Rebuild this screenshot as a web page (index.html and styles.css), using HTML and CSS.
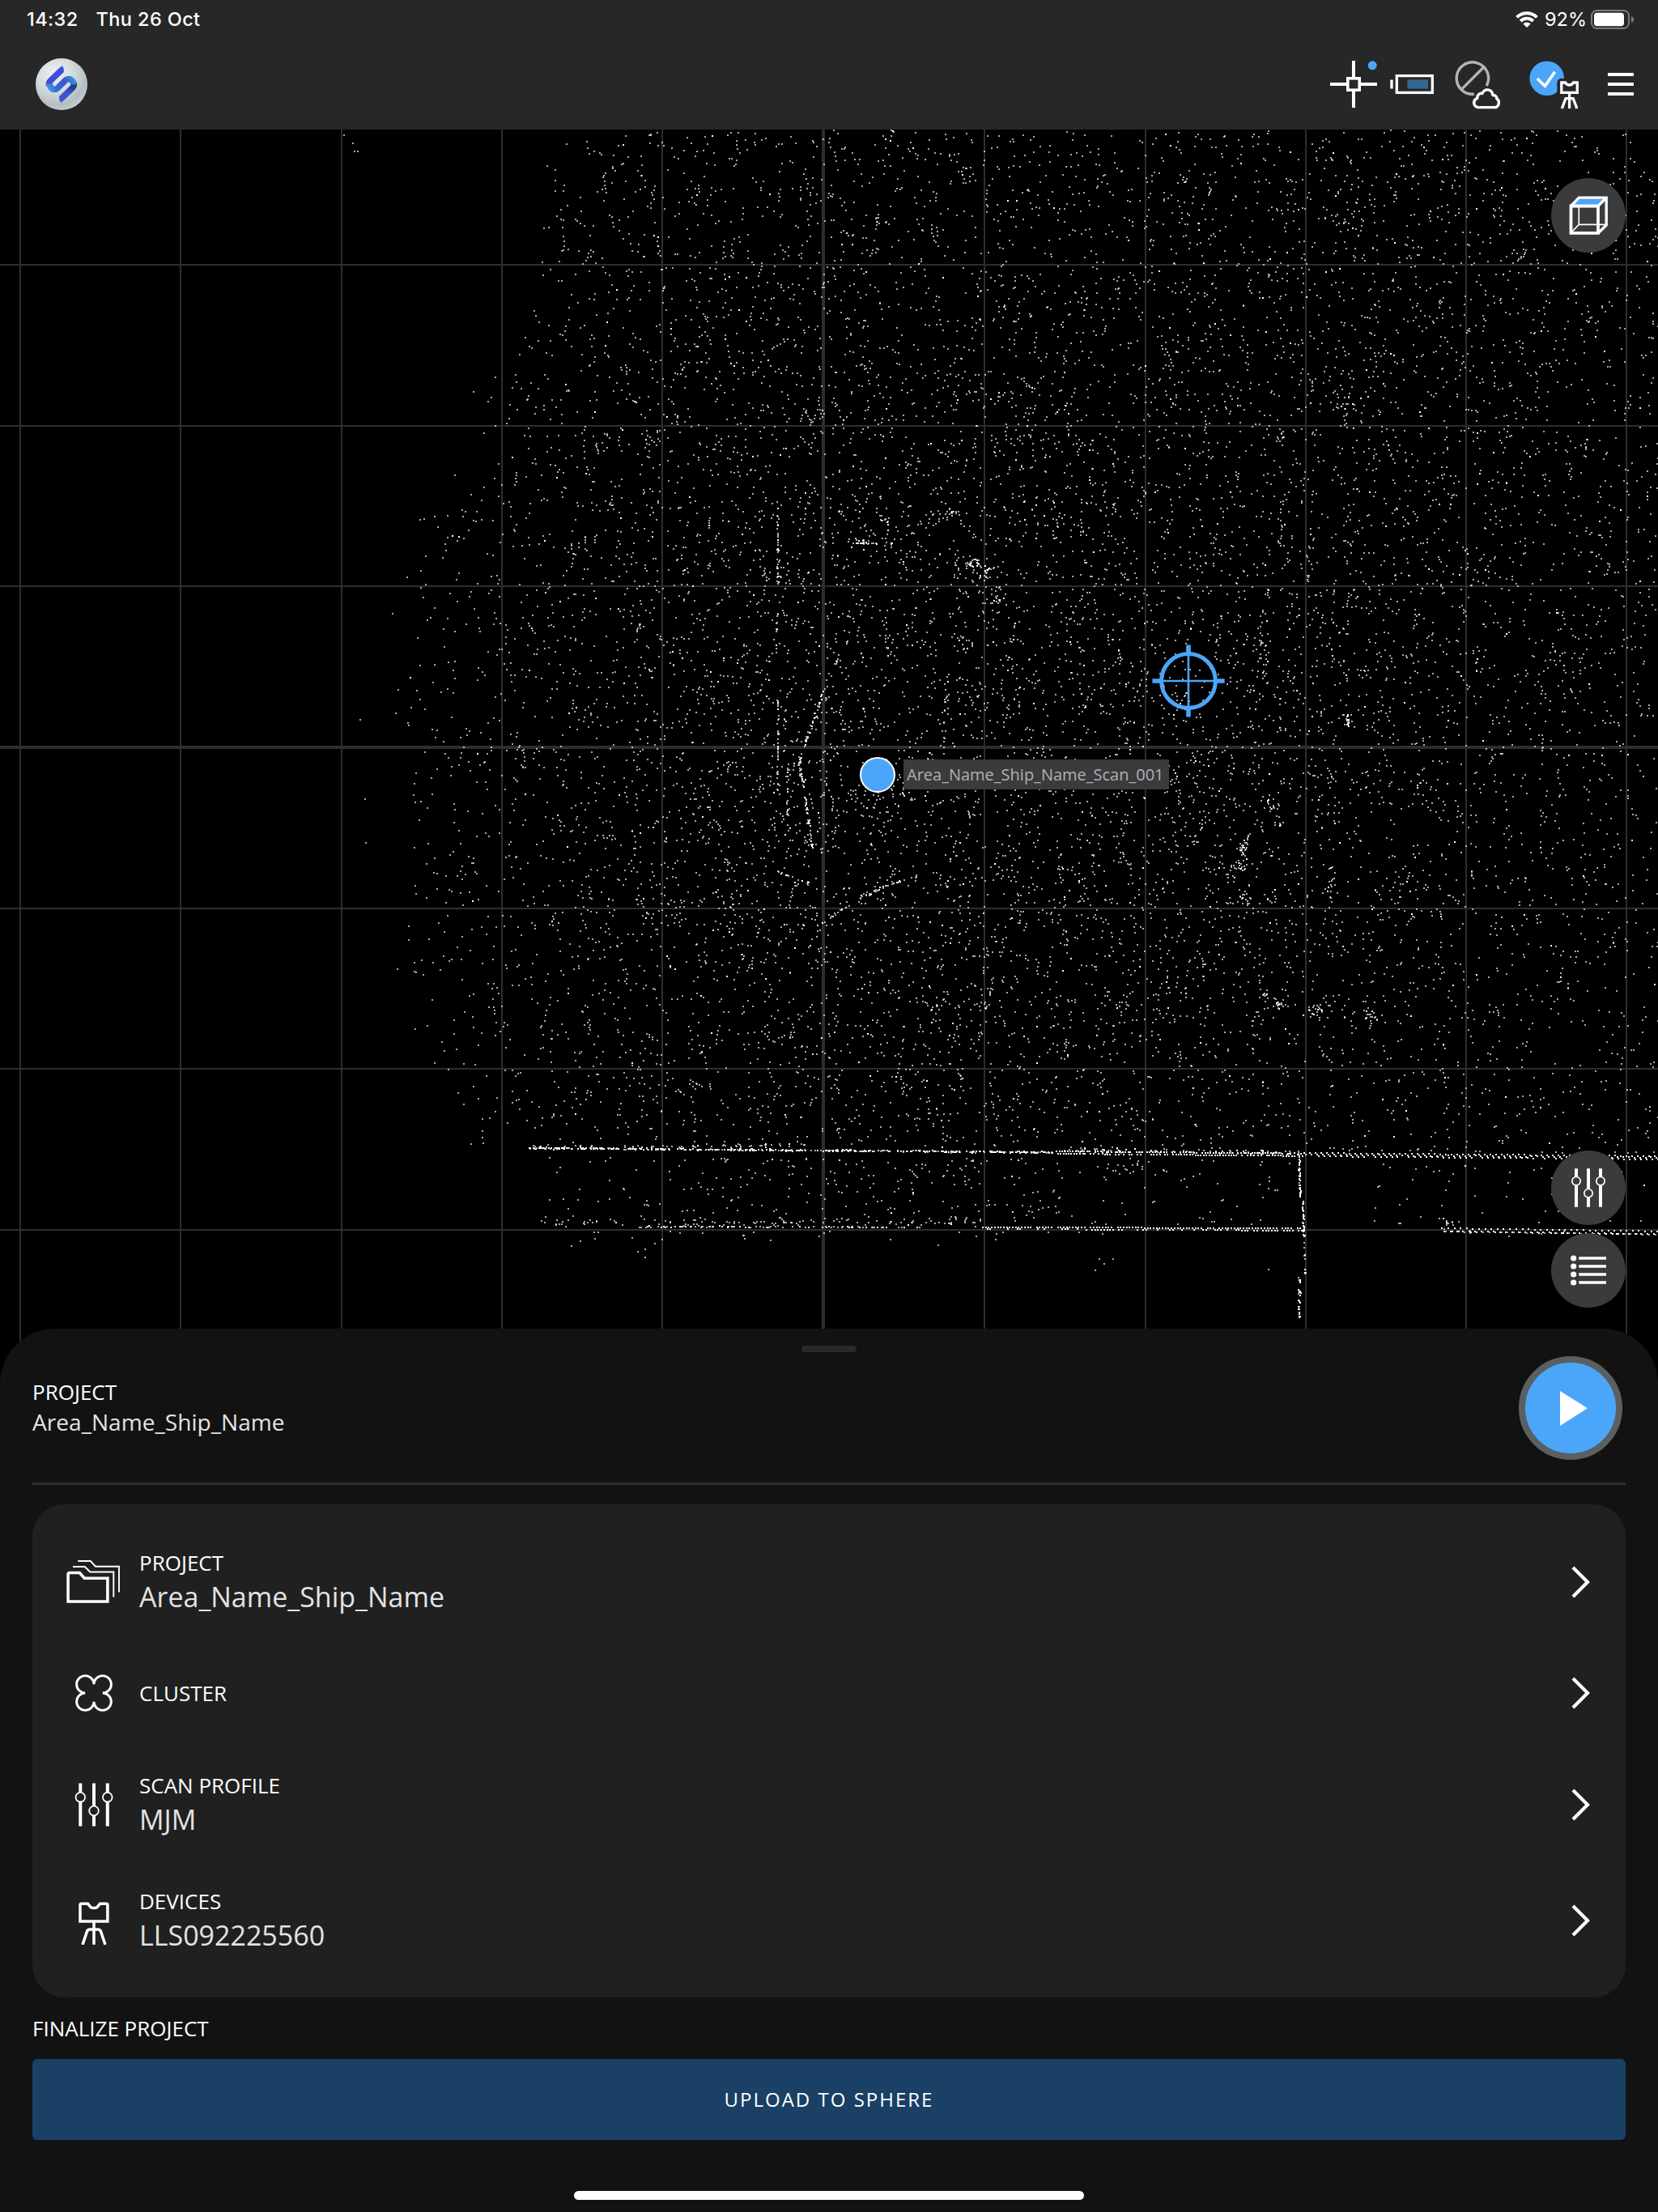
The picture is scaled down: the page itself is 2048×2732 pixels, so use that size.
FILE: index.html
```html
<!DOCTYPE html>
<html lang="en">
<head>
<meta charset="utf-8">
<title>Area_Name_Ship_Name</title>
<link rel="stylesheet" href="styles.css">
</head>
<body>
<div class="app">
  <header class="topbar">
    <div class="status">
      <div class="status-side"><span class="time">14:32</span><span class="date">Thu 26 Oct</span></div>
      <div class="status-side">
        <svg class="wifi" width="28" height="20" viewBox="0 0 28 20" fill="none" stroke="#fff" stroke-width="4"><path d="M1.6 7.3A17.5 17.5 0 0 1 26.4 7.3"/><path d="M6.2 12A11 11 0 0 1 21.8 12"/><path d="M14 20L9.4 15.4A6.5 6.5 0 0 1 18.6 15.4Z" fill="#fff" stroke="none"/></svg>
        <span class="percent">92%</span>
        <svg width="54" height="24" viewBox="0 0 54 24"><rect x="1" y="1" width="46" height="22" rx="6.5" fill="none" stroke="#7b7b7b" stroke-width="2"/><rect x="4" y="3.8" width="37" height="16.4" rx="3.8" fill="#fff"/><path d="M50 8Q53 9 53 12Q53 15 50 16Z" fill="#7b7b7b"/></svg>
      </div>
    </div>
    <nav class="tools">
      <svg class="logo" width="64" height="64" viewBox="44 72 64 64">
        <defs>
          <radialGradient id="ball" cx=".38" cy=".3" r=".8"><stop offset="0" stop-color="#eef2f3"/><stop offset=".45" stop-color="#d3dadc"/><stop offset=".75" stop-color="#b4bec0"/><stop offset="1" stop-color="#cdd5d7"/></radialGradient>
          <linearGradient id="curl" gradientUnits="userSpaceOnUse" x1="60" y1="112" x2="92" y2="96"><stop offset="0" stop-color="#3f9fe0"/><stop offset=".3" stop-color="#3a66d8"/><stop offset=".65" stop-color="#3a58d6"/><stop offset="1" stop-color="#3a9ade"/></linearGradient>
          <linearGradient id="tail" gradientUnits="userSpaceOnUse" x1="92" y1="104" x2="82" y2="114"><stop offset="0" stop-color="#173e66"/><stop offset="1" stop-color="#3c50d8"/></linearGradient>
        </defs>
        <circle cx="76" cy="104" r="32" fill="url(#ball)"/>
        <path d="M76 86.5L62.5 99.5Q60 102 60.5 106" fill="none" stroke="#3c50d8" stroke-width="7.6"/>
        <path d="M91 102Q92 106 89.5 108.5L76 121.5" fill="none" stroke="url(#tail)" stroke-width="7.6"/>
        <path d="M61 103.5C62 111 68 112 71.5 108.5L80.5 99.5C84 96 90 97 91 104.5" fill="none" stroke="url(#curl)" stroke-width="7.6"/>
        <path d="M73.5 84L76.5 81.3Q79.5 84 78.7 89L76 91ZM78.5 124L75.5 126.7Q72.5 124 73.3 119L76 117Z" fill="#3c50d8"/>
      </svg>
      <div class="indicators">
        <svg width="58" height="64" viewBox="1643 72 58 64"><path d="M1672 75V133M1643 104H1701" stroke="#fff" stroke-width="4"/><rect x="1664.8" y="96.8" width="14.4" height="14.4" fill="#272727" stroke="#fff" stroke-width="3.6"/><circle cx="1695.2" cy="80.8" r="5.5" fill="#4ba6f9"/></svg>
        <svg class="gap-16" width="54" height="64" viewBox="1717 72 54 64"><rect x="1717.3" y="98.5" width="3.4" height="11" fill="#fff"/><rect x="1725.3" y="93.6" width="44" height="20.8" fill="none" stroke="#fff" stroke-width="3.3"/><rect x="1738.3" y="98.3" width="25.7" height="11.3" fill="#33688f"/></svg>
        <svg class="gap-26" width="56" height="64" viewBox="1797 72 56 64"><g fill="none" stroke="#b4b4b4" stroke-width="3.4"><path d="M1820.8 116.2A19.7 19.7 0 1 1 1836.2 106"/><path d="M1805.3 110.4L1832.7 83"/></g><path d="M1825.5 132.6C1820 131 1818.5 124 1824.8 121.2C1824.5 117 1828 114.6 1831 115.5C1833.5 109 1842.5 109 1844 117.5C1848 117.5 1849 120 1848.7 121.8C1853 124.5 1852 130.5 1847.6 132.6Z" fill="#272727" stroke="#fff" stroke-width="3.4" stroke-linejoin="round"/></svg>
        <svg class="gap-36" width="61" height="64" viewBox="1889 72 61 64"><circle cx="1910.7" cy="96.7" r="21.3" fill="#4ba6f9"/><path d="M1898.8 97L1908.4 106.2L1920.6 88.8" fill="none" stroke="#fff" stroke-width="3.6"/><rect x="1923.3" y="97" width="32" height="40" rx="5" fill="#272727"/><g fill="none" stroke="#fff" stroke-width="3.3"><path d="M1928.8 102H1933.5Q1935.5 105 1938.5 105Q1941.5 105 1943.5 102H1948.3V114.4H1928.8Z"/><path d="M1938.6 115V134M1929.3 134L1934 121.6H1943.2L1947.9 134"/></g></svg>
        <svg class="gap-36" width="32" height="64" viewBox="1986 72 32 64"><path d="M1986 92H2018M1986 104H2018M1986 116H2018" stroke="#fff" stroke-width="4"/></svg>
      </div>
    </nav>
  </header>

  <main class="map">
    <canvas id="cloud" class="cloud" width="2048" height="1550"></canvas>
    <svg class="target" width="92" height="92" viewBox="-46 -46 92 92" fill="none" stroke="#4ba6f9"><circle r="33.4" stroke-width="5"/><path d="M-33 0H33M0 -33V33" stroke-width="2.6"/><path d="M-44.6 0H-34M34 0H44.6M0 -44.6V-34M0 34V44.6" stroke-width="5.6"/></svg>
    <div class="scan-dot"></div>
    <div class="scan-label">Area_Name_Ship_Name_Scan_001</div>
    <button class="round view-cube"><svg width="92" height="92" viewBox="0 0 92 92" fill="none" stroke="#fff"><path d="M34.3 35V57.3H68M34.3 57.3L24 68" stroke-width="1.7"/><path d="M27 33.8L34.7 25.5H65L57.5 33.8Z" fill="#4ba6f9" stroke="none"/><path d="M24.5 34.5L34.3 24.1H68.2V58L58 68M58 34.5L68.2 24.1" stroke-width="3.4"/><path d="M24.5 34.5H58V67.9H24.5Z" stroke-width="3.8"/></svg></button>
    <button class="round tune"><svg width="92" height="92" viewBox="0 0 92 92" fill="#3a3b3d" stroke="#fff"><path d="M31 22.3V69.7M46 22.3V69.7M61 22.3V69.7" stroke-width="4"/><g stroke-width="1.7"><circle cx="31" cy="37.7" r="5.2"/><circle cx="46" cy="52.7" r="5.2"/><circle cx="61" cy="37.7" r="5.2"/></g></svg></button>
    <button class="round list"><svg width="92" height="92" viewBox="0 0 92 92"><path d="M34.2 31H68M34.2 41H68M34.2 51H68M34.2 61H68" stroke="#fff" stroke-width="3.7"/><g fill="#fff"><circle cx="27.7" cy="31" r="3.6"/><circle cx="27.7" cy="41" r="3.6"/><circle cx="27.7" cy="51" r="3.6"/><circle cx="27.7" cy="61" r="3.6"/></g></svg></button>
  </main>

  <section class="sheet">
    <div class="handle"></div>
    <div class="summary">
      <div class="summary-text"><div class="label">PROJECT</div><div class="summary-name">Area_Name_Ship_Name</div></div>
      <button class="play"><svg width="112" height="112" viewBox="8 8 112 112"><path d="M51 43L85 64.3L51 86Z" fill="#fff"/></svg></button>
    </div>
    <div class="card">
      <div class="row">
        <svg class="icon" width="76" height="60" viewBox="78 1924 76 60" fill="none" stroke="#fff"><path d="M84.1 1978V1944.5Q84.1 1942.5 86 1942.5H98.3L104.3 1949.2H132.9V1978Z" stroke-width="3.6"/><path d="M90 1935H104.7L111.3 1941.5H140.3V1972.6M96.3 1928H111.8L118 1934.7H147V1966.4" stroke-width="1.9"/></svg>
        <div class="texts"><div class="label">PROJECT</div><div class="value">Area_Name_Ship_Name</div></div>
        <svg class="chevron" width="24" height="44" viewBox="0 0 24 44"><path d="M3 4L21 22L3 40"/></svg>
      </div>
      <div class="row short">
        <svg class="icon" width="76" height="60" viewBox="-14 -6 76 60" fill="none" stroke="#fff" stroke-width="2.9"><path d="M13.2 24A10.7 10.7 0 1 1 24 13.2A10.7 10.7 0 1 1 34.8 24A10.7 10.7 0 1 1 24 34.8A10.7 10.7 0 1 1 13.2 24Z"/></svg>
        <div class="texts"><div class="label">CLUSTER</div></div>
        <svg class="chevron" width="24" height="44" viewBox="0 0 24 44"><path d="M3 4L21 22L3 40"/></svg>
      </div>
      <div class="row">
        <svg class="icon" width="76" height="60" viewBox="78 2198.5 76 60" fill="#202020" stroke="#fff"><path d="M99.3 2202V2255M116 2202V2255M132.8 2202V2255" stroke-width="4"/><g stroke-width="1.8"><circle cx="99.3" cy="2219.2" r="5.8"/><circle cx="116" cy="2236" r="5.8"/><circle cx="132.8" cy="2219.2" r="5.8"/></g></svg>
        <div class="texts"><div class="label">SCAN PROFILE</div><div class="value">MJM</div></div>
        <svg class="chevron" width="24" height="44" viewBox="0 0 24 44"><path d="M3 4L21 22L3 40"/></svg>
      </div>
      <div class="row">
        <svg class="icon" width="76" height="60" viewBox="78 2341.5 76 60" fill="none" stroke="#fff" stroke-width="3.5"><path d="M99 2372.6V2352.5Q99 2350.8 100.6 2350.8H108.5L112.3 2355.3Q116 2356.5 119.7 2355.3L123.5 2350.8H131.2Q132.9 2350.8 132.9 2352.5V2372.6Z"/><path d="M116 2373V2401.3M102 2401.3L107.3 2385.5Q108.2 2382.6 111 2382.6H121Q123.7 2382.6 124.7 2385.5L130 2401.3"/></svg>
        <div class="texts"><div class="label">DEVICES</div><div class="value">LLS092225560</div></div>
        <svg class="chevron" width="24" height="44" viewBox="0 0 24 44"><path d="M3 4L21 22L3 40"/></svg>
      </div>
    </div>
    <div class="label finalize">FINALIZE PROJECT</div>
    <button class="upload">UPLOAD TO SPHERE</button>
    <div class="home"></div>
  </section>
</div>
<script src="cloud.js"></script>
</body>
</html>
```
FILE: styles.css
```css
* { box-sizing: border-box; }
body { margin: 0; background: #000; color: #fff; font-family: "Open Sans", "Noto Sans", sans-serif; }
button { border: 0; padding: 0; color: inherit; font: inherit; }
svg { display: block; flex: none; }

.app { width: 2048px; height: 2732px; display: flex; flex-direction: column; overflow: hidden; }

.topbar { height: 160px; flex: none; background: #272727; }
.status { height: 48px; padding: 0 29px 0 33px; display: flex; justify-content: space-between; font: 450 23.5px/48px Inter, sans-serif; letter-spacing: .4px; }
.status-side { display: flex; align-items: center; }
.date { margin-left: 22px; }
.percent { margin: 0 5px 0 8px; font-weight: 400; letter-spacing: 0; }
.tools { height: 112px; padding: 0 30px 0 44px; display: flex; align-items: center; justify-content: space-between; }
.indicators { display: flex; }
.gap-16 { margin-left: 16px; }
.gap-26 { margin-left: 26px; }
.gap-36 { margin-left: 36px; }

.map { position: relative; height: 1550px; flex: none; }
.cloud { display: block; }
.target { position: absolute; left: 1422px; top: 635px; }
.scan-dot { position: absolute; left: 1062px; top: 775px; width: 44px; height: 44px; border: 2px solid #fff; border-radius: 50%; background: #4ba6f9; }
.scan-label { position: absolute; left: 1116px; top: 778px; width: 328px; height: 37px; padding-left: 4px; background: #3a3b3d; color: #b0b0b0; font-size: 20px; line-height: 37px; white-space: nowrap; }
.round { position: absolute; left: 1916px; width: 92px; height: 92px; border-radius: 50%; background: #3a3b3d; }
.view-cube { top: 60px; }
.tune { top: 1261px; }
.list { top: 1363px; }

.sheet { position: relative; flex: 1; margin-top: -69px; padding: 21px 40px 0; border-radius: 68px 68px 0 0; background: #121212; display: flex; flex-direction: column; }
.handle { width: 68px; height: 8px; flex: none; align-self: center; border-radius: 4px; background: #292929; }
.summary { margin-top: 5px; height: 159px; flex: none; padding: 0 4px 28px 0; border-bottom: 3px solid #2f2f2f; display: flex; align-items: center; justify-content: space-between; }
.summary-text { padding-bottom: 2px; }
.label { font-size: 26px; line-height: 36px; color: #fff; }
.summary-name { font-size: 28.1px; line-height: 38px; color: #e3e3e3; }
.play { width: 128px; height: 128px; border: 8px solid #5b5f60; border-radius: 50%; background: #4ba6f9; }
.card { margin-top: 24px; padding: 24px 44px 24px 38px; border-radius: 40px; background: #202020; }
.row { height: 143px; display: flex; align-items: center; }
.row.short { height: 132px; }
.texts { flex: 1; margin-left: 18px; }
.value { font-size: 34px; line-height: 48px; color: #e3e3e3; }
.chevron { fill: none; stroke: #fff; stroke-width: 4.2; }
.finalize { margin-top: 20px; }
.upload { margin-top: 20px; height: 100px; flex: none; padding-bottom: 2px; border-radius: 6px; background: #1a4066; font-size: 24px; letter-spacing: 2px; }
.home { margin-top: 63px; width: 630px; height: 11px; align-self: center; border-radius: 6px; background: #fff; }
```
FILE: cloud.js
```js
const ctx = document.getElementById('cloud').getContext('2d');
const TOP = 160;

// Repeatable random numbers, so the cloud is the same on each load.
let seed = 90210;
function rnd() {
  seed = (seed + 0x6D2B79F5) | 0;
  let t = Math.imul(seed ^ (seed >>> 15), 1 | seed);
  t = (t + Math.imul(t ^ (t >>> 7), 61 | t)) ^ t;
  return ((t ^ (t >>> 14)) >>> 0) / 4294967296;
}
function gauss() { return (rnd() + rnd() + rnd() - 1.5) / 1.5 * 1.7; }

ctx.fillStyle = '#000';
ctx.fillRect(0, 0, 2048, 1550);

// Grid: the sixth column and the fourth row are the axes.
ctx.fillStyle = '#2e2e2e';
[24, 222, 421, 619, 817, 1015, 1215, 1414, 1612, 1810, 2008].forEach((x, i) => ctx.fillRect(x, 0, i === 5 ? 4 : 2, 1550));
[326, 525, 723, 921, 1121, 1319, 1518].forEach((y, i) => ctx.fillRect(0, y - TOP, 2048, i === 3 ? 4 : 2));

function dot(x, y, white) {
  ctx.fillStyle = white ? '#fff' : 'rgba(255,255,255,.67)';
  ctx.fillRect(Math.round(x), Math.round(y) - TOP, 2, 2);
}

// Relative point density at the nodes xs, ys.
const xs = [500, 620, 720, 920, 1110, 1310, 1510, 1710, 1910, 2048];
const ys = [160, 250, 425, 625, 820, 1020, 1220, 1415];
const density = [
  [0, 14, 36, 35, 42, 42, 42, 42, 40, 32],
  [0, 20, 36, 38, 50, 46, 48, 52, 46, 38],
  [10, 28, 38, 44, 58, 50, 54, 60, 44, 36],
  [18, 34, 44, 62, 70, 60, 58, 56, 44, 34],
  [20, 36, 48, 68, 78, 70, 70, 54, 42, 34],
  [22, 36, 46, 68, 80, 72, 74, 48, 38, 30],
  [20, 32, 44, 62, 70, 62, 62, 44, 29, 24],
  [18, 26, 36, 40, 44, 40, 42, 34, 28, 26]
];
function seg(list, v) {
  let i = 0;
  while (i < list.length - 2 && v > list[i + 1]) i++;
  return [i, Math.max(0, Math.min(1, (v - list[i]) / (list[i + 1] - list[i])))];
}
function densityAt(x, y) {
  const [i, a] = seg(xs, x), [j, b] = seg(ys, y);
  const r0 = density[j][i] * (1 - a) + density[j][i + 1] * a;
  const r1 = density[j + 1][i] * (1 - a) + density[j + 1][i + 1] * a;
  return r0 * (1 - b) + r1 * b;
}
const edgeY = [160, 326, 400, 490, 600, 640, 740, 900, 1150, 1270, 1340, 1415];
const edgeX = [685, 668, 645, 597, 585, 530, 513, 500, 500, 517, 535, 575];
function edge(y) {
  const [i, a] = seg(edgeY, y);
  return edgeX[i] * (1 - a) + edgeX[i + 1] * a;
}
for (let n = 0; n < 23200; n++) {
  const x = 480 + rnd() * 1568, y = 160 + rnd() * 1257;
  if (x < edge(y) + gauss() * 12) continue;
  if (rnd() * 102 < Math.max(16, densityAt(x, y))) dot(x, y, rnd() < .035);
}

// Small groups and short streaks that give the surface its grain.
for (let n = 0; n < 260; n++) {
  let x = 620 + rnd() * 1400, y = 170 + rnd() * 1200;
  if (x < edge(y) + 20) continue;
  const dx = (rnd() - .4) * 5, dy = 2 + rnd() * 6, k = 2 + rnd() * 3;
  for (let i = 0; i < k; i++) { dot(x, y, rnd() < .06); x += dx + gauss() * 3; y += dy; }
}

function blob(x, y, sx, sy, n) { for (let i = 0; i < n; i++) dot(x + gauss() * sx, y + gauss() * sy, rnd() < .12); }
function line(x0, y0, x1, y1, n, jitter, white) {
  for (let i = 0; i < n; i++) {
    const t = rnd();
    dot(x0 + (x1 - x0) * t + gauss() * jitter, y0 + (y1 - y0) * t + gauss() * jitter, rnd() < white);
  }
}
blob(1200, 694, 9, 6, 22); blob(1216, 708, 5, 12, 20); blob(1229, 738, 8, 14, 18); blob(1180, 633, 10, 4, 14);
blob(1064, 667, 5, 4, 8); blob(1094, 640, 7, 4, 8); blob(1536, 1046, 6, 7, 18); blob(1532, 1070, 9, 9, 18);
blob(1538, 1109, 7, 6, 14); blob(1578, 1238, 7, 7, 16); blob(1563, 1228, 6, 5, 8);
blob(1624, 1246, 10, 7, 18); blob(1660, 490, 22, 12, 20); blob(1580, 540, 5, 8, 10);
blob(1558, 790, 9, 50, 34); blob(1568, 994, 9, 12, 16); blob(1578, 1016, 3, 8, 9);
blob(1160, 1238, 30, 8, 16); blob(1215, 1240, 8, 8, 10); blob(1085, 975, 40, 24, 30);
blob(1390, 1442, 26, 8, 14); blob(1690, 1255, 10, 12, 16);
line(960, 619, 960, 724, 34, 1, .2);
line(960, 750, 958, 780, 9, 1.2, .1);
line(960, 860, 960, 975, 34, 1, .1);
line(972, 940, 972, 1020, 20, 1.4, .05);
line(1020, 843, 995, 916, 26, 1.2, .5);
line(996, 908, 986, 945, 18, 1.8, .3);
line(987, 940, 1003, 1046, 44, 1.2, .5);
line(1084, 1096, 1113, 1087, 15, .5, .75);
line(1062, 1107, 1084, 1098, 17, 1.8, .2);
line(1016, 1138, 1048, 1118, 14, 1.4, .2);
line(1052, 670, 1102, 670, 16, .5, .5);
line(958, 1075, 1000, 1090, 12, 1, .3);
line(1664, 882, 1664, 896, 14, 1.4, .8);

// Wall along the lower side: one row at the left, two stepped rows at the right.
line(652, 1417, 1300, 1422.5, 430, .9, .6);
line(650, 1416, 1000, 1414, 55, 2.5, .2);
line(1300, 1419, 1610, 1423, 90, 2.8, .3);
for (let x = 1304; x < 1610; x += 3.4) {
  const y = 1421 + (x - 1304) * .009;
  for (let k = 0; k < 2; k++) if (rnd() < .84) dot(x + k * 1.6 + gauss() * .5, y + k * 3, true);
}
for (let x = 1610; x < 2048; x += 7 + gauss() * .4) {
  const y = 1423 + (x - 1610) * .009;
  dot(x, y, true);
  dot(x + 2.4, y + 1.5 + rnd(), true);
  if (rnd() < .85) dot(x + 4, y + 4, true);
  if (rnd() < .3) dot(x + rnd() * 8, y - 3 - rnd() * 4, false);
}

// Second wall and the strip between both.
for (let x = 1213; x < 1606; x += 3.7) {
  const y = 1514.5 + (x - 1210) * .005;
  if (rnd() < .93) dot(x, y, true);
  if (rnd() < .2 + (x - 1213) / 500) dot(x + 1.8, y + 2.4, true);
}
line(786, 1514, 1140, 1515, 90, .7, .35);
line(670, 1509, 1210, 1509, 90, 4.5, .05);
for (let x = 1780; x < 2048; x += 7.6 + gauss() * .4) {
  const y = 1516 + (x - 1780) * .014;
  dot(x, y, true); dot(x + 3, y + 3.6, true); dot(x + 5, y + 4.2, rnd() < .5);
}
blob(1786, 1508, 8, 5, 10);
for (let n = 0; n < 150; n++) dot(860 + rnd() * 735, 1428 + rnd() * 84, rnd() < .04);
for (let n = 0; n < 130; n++) dot(790 + rnd() * 520, 1428 + rnd() * 84, false);
for (let n = 0; n < 26; n++) dot(665 + rnd() * 130, 1428 + rnd() * 88, false);
for (let n = 0; n < 62; n++) dot(1690 + rnd() * 358, 1436 + rnd() * 90, rnd() < .06);
for (let n = 0; n < 30; n++) dot(670 + rnd() * 700, 1520 + rnd() * rnd() * 30, false);
line(1604, 1427, 1605, 1477, 40, .9, .8);
line(1608.5, 1483, 1610, 1526, 34, .9, .8);
line(1610, 1526, 1611, 1575, 9, .9, .6);
line(1604, 1576, 1604, 1628, 28, 1.3, .8);

// Lone points outside the surface.
[[424, 166], [435, 176], [437, 186], [441, 186], [484, 757], [444, 888], [450, 986], [451, 1040],
 [518, 641], [523, 640], [536, 637], [552, 636], [584, 483], [490, 1196], [512, 1270], [504, 1160],
 [796, 1542], [796, 1552], [1352, 1568], [1357, 1554], [1363, 1560], [1374, 1554], [1566, 1567],
 [606, 490], [611, 465], [561, 586], [488, 880], [502, 712]].forEach(p => dot(p[0], p[1], false));
```
